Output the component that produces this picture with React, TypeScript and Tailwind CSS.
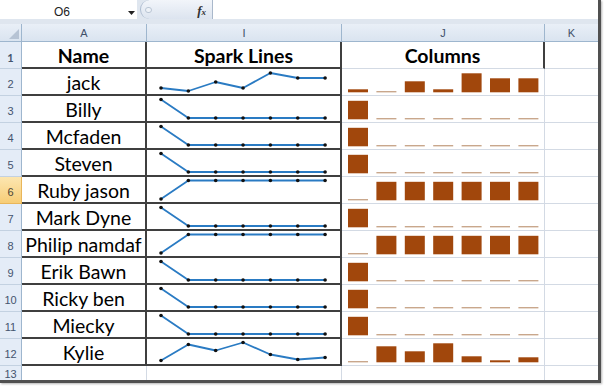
import React from "react";

type Row = { n: number; name: string; line: number[]; bars: number[] };

const drop = { line: [18.5, 0, 0, 0, 0, 0, 0], bars: [18.5, 0, 0, 0, 0, 0, 0] };
const rise = { line: [0, 18.5, 18.5, 18.5, 18.5, 18.5, 18.5], bars: [0, 18.5, 18.5, 18.5, 18.5, 18.5, 18.5] };

const rows: Row[] = [
  { n: 2, name: "jack", line: [3, 0, 9, 3, 18, 13, 13], bars: [3, 0, 11, 3, 19, 14, 14] },
  { n: 3, name: "Billy", ...drop },
  { n: 4, name: "Mcfaden", ...drop },
  { n: 5, name: "Steven", ...drop },
  { n: 6, name: "Ruby jason", ...rise },
  { n: 7, name: "Mark Dyne", ...drop },
  { n: 8, name: "Philip namdaf", ...rise },
  { n: 9, name: "Erik Bawn", ...drop },
  { n: 10, name: "Ricky ben", ...drop },
  { n: 11, name: "Miecky", ...drop },
  { n: 12, name: "Kylie", line: [0.5, 16.5, 10.5, 18.5, 6.5, 1.5, 3.5], bars: [0, 16, 11, 19, 6, 2, 5] },
];

const cols = "grid grid-cols-[22px_125px_195px_203px_53px]";

function Spark({ values }: { values: number[] }) {
  const pts = values.map((v, i) => [14 + i * 27.35, 22 - v]);
  return (
    <svg width="193" height="25" className="block">
      <polyline
        points={pts.map((p) => p.join(",")).join(" ")}
        fill="none"
        stroke="#2a7bc3"
        strokeWidth="1.8"
        strokeLinejoin="round"
      />
      {pts.map(([x, y], i) => (
        <circle key={i} cx={x} cy={y} r="1.8" fill="#111" />
      ))}
    </svg>
  );
}

function Bars({ values }: { values: number[] }) {
  return (
    <svg width="203" height="26" className="block">
      {values.map((v, i) =>
        v === 0 ? (
          <rect key={i} x={6 + i * 28.4} y={22} width={20} height={1.4} fill="#c9a78c" />
        ) : (
          <rect key={i} x={6 + i * 28.4} y={23.3 - v} width={20} height={v} fill="#a1470c" />
        )
      )}
    </svg>
  );
}

function RowHead({ n, active }: { n: number; active?: boolean }) {
  return (
    <div
      className={
        active
          ? "flex items-end justify-center pb-[5px] border-r border-b border-[#e9b65a] bg-linear-to-b from-[#fce6b0] to-[#f7cd76] text-[11px] leading-none text-[#4a4636]"
          : "flex items-end justify-center pb-[5px] border-r border-b border-r-[#9eb6ce] border-b-[#c3d1e1] bg-[#e4ecf7] text-[11px] leading-none text-[#44546e]"
      }
    >
      {n}
    </div>
  );
}

export default function App() {
  return (
    <div className="w-[604px] h-[386px] bg-white font-['Liberation_Sans',sans-serif]">
      <div className="w-[601px] h-[383px] overflow-hidden bg-white border-r-[3px] border-b-[3px] border-[#505050] shadow-[1px_1px_2px_rgba(0,0,0,0.3)]">
        {/* formula bar */}
        <div className="h-[24px] bg-[#dfe6ef] flex items-start">
          <div className="w-[137px] h-[19px] bg-white flex items-center relative">
            <span className="w-[124px] text-center text-[12px] leading-none pt-[5px] text-[#222]">O6</span>
            <svg width="7" height="4" className="absolute left-[128px] top-[11px]">
              <polygon points="0,0 7,0 3.5,4" fill="#222" />
            </svg>
          </div>
          <div className="w-[75px] h-[19px] flex items-center">
            <div className="ml-[3px] w-[72px] h-[19px] rounded-l-[10px] border-l border-[#aebdd0] bg-linear-to-b from-[#f2f5fa] to-[#dce4ef] flex items-center">
              <span className="ml-[4px] w-[7px] h-[6px] rounded-full border border-[#b9c5d4] bg-[#eef2f7]" />
              <span className="ml-auto mr-[6px] pt-[2px] font-['Liberation_Serif',serif] italic font-bold text-[13px] leading-none text-[#333]">
                f<span className="text-[9px]">x</span>
              </span>
            </div>
          </div>
          <div className="flex-1 h-[19px] bg-white border-l border-[#a9b8cb]" />
        </div>

        {/* column letters */}
        <div className={`${cols} h-[18px] text-[11px] leading-none text-[#3f4f69]`}>
          <div className="relative border-r border-b border-[#9eb6ce] bg-linear-to-b from-[#e9eff7] to-[#dae4f0]">
            <svg width="10" height="10" className="absolute right-[2px] bottom-[2px]">
              <polygon points="10,0 10,10 0,10" fill="#b6c3d4" />
            </svg>
          </div>
          <div className="flex items-center justify-center pt-[2px] border-r border-b border-[#9eb6ce] bg-linear-to-b from-[#e9eff7] to-[#dae4f0]">A</div>
          <div className="flex items-center justify-center pt-[2px] border-r border-b border-[#9eb6ce] bg-linear-to-b from-[#e9eff7] to-[#dae4f0]">I</div>
          <div className="flex items-center justify-center pt-[2px] border-r border-b border-[#9eb6ce] bg-linear-to-b from-[#e9eff7] to-[#dae4f0]">J</div>
          <div className="flex items-center justify-center pt-[2px] border-b border-[#9eb6ce] bg-linear-to-b from-[#e9eff7] to-[#dae4f0]">K</div>
        </div>

        {/* header row */}
        <div className={`${cols} h-[27px] font-['Lato',sans-serif] text-[19.5px] leading-none font-bold text-black`}>
          <RowHead n={1} />
          <div className="flex items-center justify-center pt-[2px] border-r-2 border-b-2 border-[#3f3f3f]">Name</div>
          <div className="flex items-center justify-center pt-[2px] border-r-2 border-b-2 border-[#3f3f3f]">Spark Lines</div>
          <div className="flex items-center justify-center pt-[1px] border-r-2 border-r-[#3f3f3f] border-b border-b-[#d3dae4]">Columns</div>
          <div className="border-b border-[#d3dae4]" />
        </div>

        {rows.map((r) => (
          <div key={r.n} className={`${cols} h-[27px]`}>
            <RowHead n={r.n} active={r.n === 6} />
            <div className="flex items-center justify-center pt-[2px] border-r-2 border-b-2 border-[#3f3f3f] font-['Lato',sans-serif] text-[19.5px] leading-none text-black whitespace-nowrap">
              {r.name}
            </div>
            <div className="border-r-2 border-b-2 border-[#3f3f3f]">
              <Spark values={r.line} />
            </div>
            <div className="border-r border-b border-[#d3dae4]">
              <Bars values={r.bars} />
            </div>
            <div className="border-b border-[#d3dae4]" />
          </div>
        ))}

        {/* row 13 */}
        <div className={`${cols} h-[14px]`}>
          <div className="flex items-end justify-center border-r border-[#9eb6ce] bg-[#e4ecf7] text-[11px] leading-none text-[#44546e]">13</div>
          <div className="border-r border-[#d3dae4]" />
          <div className="border-r border-[#d3dae4]" />
          <div className="border-r border-[#d3dae4]" />
          <div />
        </div>
      </div>
    </div>
  );
}
